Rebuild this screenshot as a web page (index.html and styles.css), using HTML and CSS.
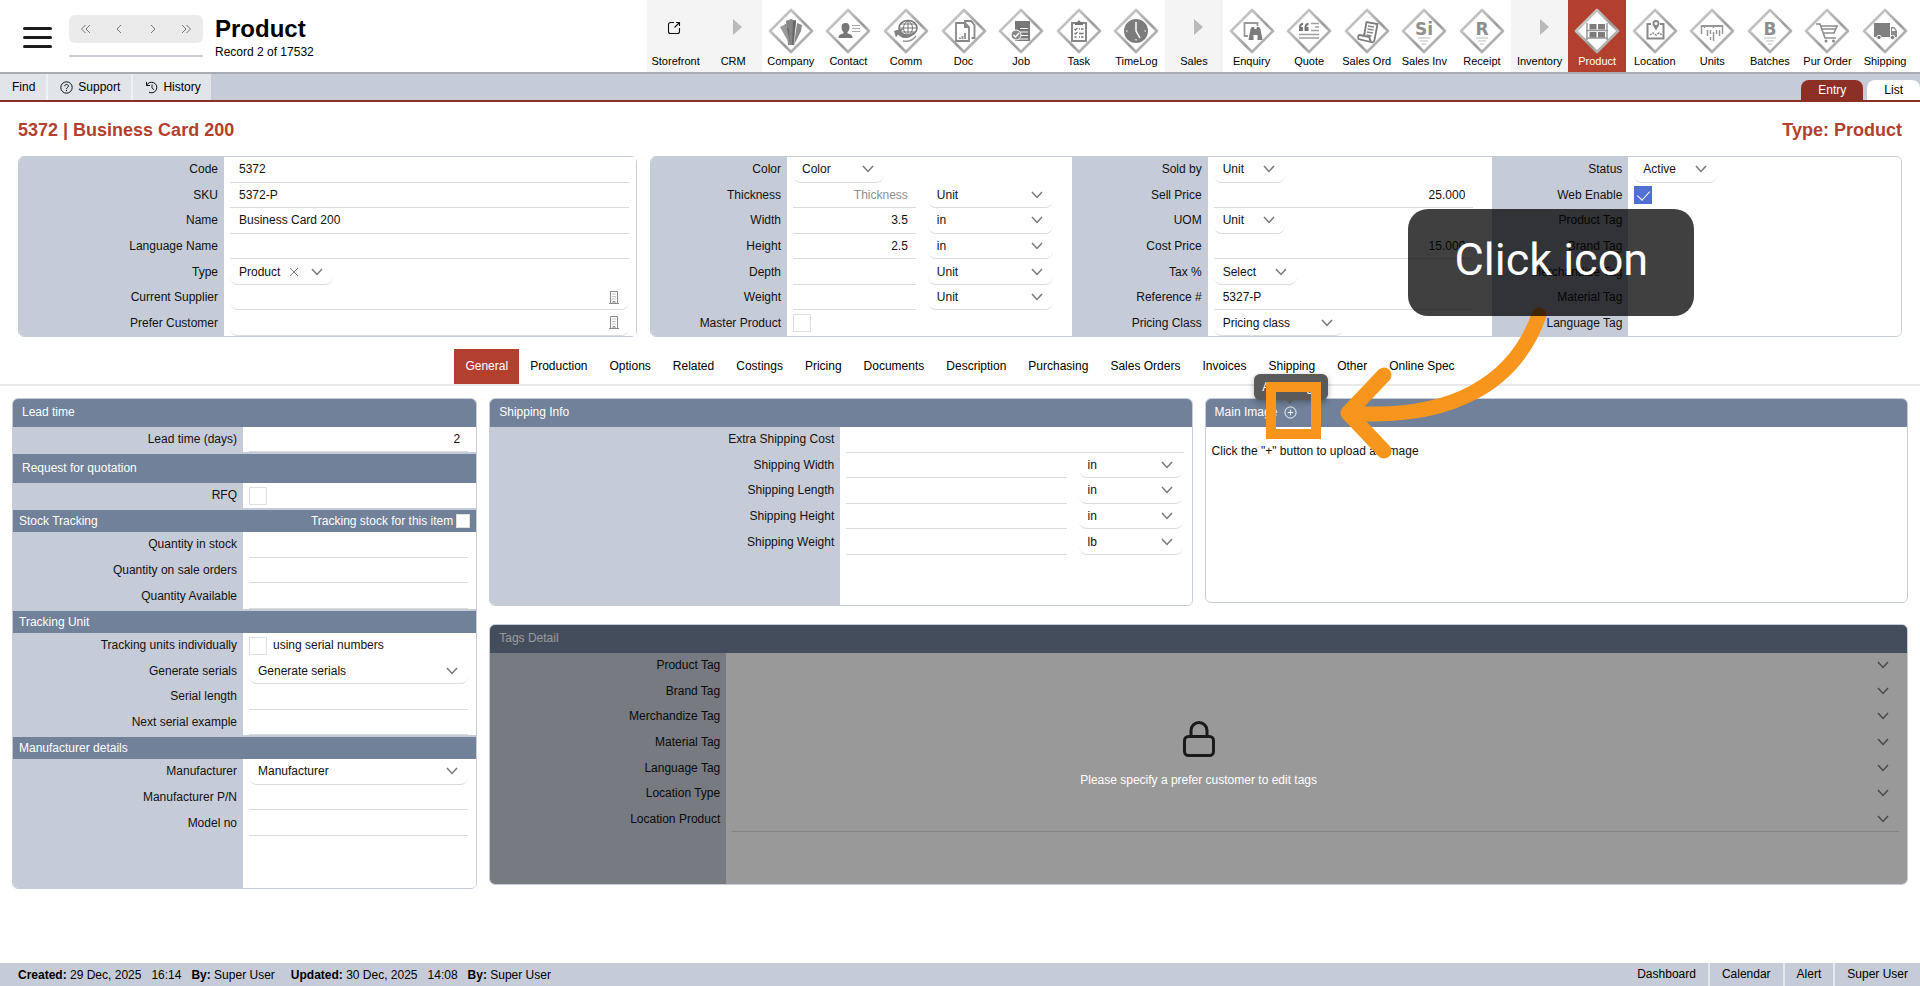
FILE: index.html
```html
<!DOCTYPE html>
<html lang="en">
<head>
<meta charset="utf-8">
<title>Product - 5372 | Business Card 200</title>
<link rel="stylesheet" href="styles.css">
</head>
<body>
<svg class="defs" aria-hidden="true">
  <defs>
    <linearGradient id="edge" x1="0" y1="0" x2="1" y2="1">
      <stop offset="0" stop-color="#d8d8d8"/><stop offset="0.45" stop-color="#b0b0b0"/><stop offset="0.6" stop-color="#9a9a9a"/><stop offset="1" stop-color="#d8d8d8"/>
    </linearGradient>
    <symbol id="chev" viewBox="0 0 12 8"><path d="M1 1l5 5.500 5-5.500" fill="none" stroke="currentColor" stroke-width="1.500"/></symbol>
    <symbol id="diamond" viewBox="0 0 46 46"><path d="M23 2L44 23 23 44 2 23z" fill="#fff" stroke="url(#edge)" stroke-width="2.600" stroke-linejoin="round"/></symbol>
    <symbol id="building" viewBox="0 0 10 13"><path d="M1.500 12V.5h7V12M0 12.500h10M4 12.500v-2h2v2M3.500 3h1M5.500 3h1M3.500 5.500h1M5.500 5.500h1M3.500 8h1M5.500 8h1" fill="none" stroke="currentColor"/></symbol>
  </defs>
</svg>

<header class="top">
  <button class="menu" type="button" aria-label="Menu"><span></span><span></span><span></span></button>
  <div class="pager-box">
    <div class="pager">
      <button type="button" aria-label="First"><svg viewBox="0 0 12 10"><path d="M5.500 1l-4 4 4 4M10 1L6 5l4 4"/></svg></button>
      <button type="button" aria-label="Previous"><svg viewBox="0 0 12 10"><path d="M8 1L4 5l4 4"/></svg></button>
      <button type="button" aria-label="Next"><svg viewBox="0 0 12 10"><path d="M4 1l4 4-4 4"/></svg></button>
      <button type="button" aria-label="Last"><svg viewBox="0 0 12 10"><path d="M2 1l4 4-4 4M6.500 1l4 4-4 4"/></svg></button>
    </div>
  </div>
  <div class="titles">
    <h1>Product</h1>
    <p>Record 2 of 17532</p>
  </div>
  <nav class="modules">
    <a class="mod group" href="#"><span class="pic"><svg class="store" viewBox="0 0 14 14"><path d="M7 1.500H3.500a2 2 0 0 0-2 2v7a2 2 0 0 0 2 2h7a2 2 0 0 0 2-2V7M9 1.500h3.500V5M12.500 1.500L7.500 6.500" fill="none" stroke="#111" stroke-width="1.100"/></svg></span>Storefront</a>
    <a class="mod group" href="#"><span class="pic"><svg class="tri" viewBox="0 0 9 16"><path d="M0 0l9 8-9 8z" fill="#bababa"/></svg></span>CRM</a>
    <a class="mod" href="#"><span class="pic"><svg viewBox="0 0 46 46"><use href="#diamond"/><path d="M18 13l5-2 5 2-2 24h-6z" fill="#868686"/><path d="M12 19l4-2 5 4 1 16z" fill="#999"/><path d="M16 17l2-1 4 20-1-15z" fill="#6a6a6a"/><path d="M34 17l-5-2-3 22 7-14z" fill="#8a8a8a"/><path d="M25 13l3-1-3 25h-1z" fill="#666"/></svg></span>Company</a>
    <a class="mod" href="#"><span class="pic"><svg viewBox="0 0 46 46"><use href="#diamond"/><path d="M20.500 15c3 0 4 2 4 4.500 0 2-1 4-2 4.500v1.500c3 .5 5 1.500 5 4.500H13.500c0-3 2-4 5-4.500V24c-1-.5-2-2.500-2-4.500 0-2.500 1-4.500 4-4.500z" fill="#777"/><path d="M27 17.500h8M27 20.500h8M27 23.500h8" stroke="#aaa"/></svg></span>Contact</a>
    <a class="mod" href="#"><span class="pic"><svg viewBox="0 0 46 46"><use href="#diamond"/><ellipse cx="25" cy="20" rx="9" ry="7.500" fill="#fff" stroke="#777" stroke-width="1.500"/><path d="M25 12.500v15M16 20h18M18 16h14M18 24h14M25 12.500c-6 4-6 11 0 15M25 12.500c6 4 6 11 0 15" stroke="#777" fill="none"/><path d="M11 23l10-3-3 3.500c3 4 10 4 16-2-3 8-13 12-19 5l-2 3z" fill="#808080"/><path d="M20 33c5 1 10-1 13-5" stroke="#999" fill="none" stroke-width="1.500"/></svg></span>Comm</a>
    <a class="mod" href="#"><span class="pic"><svg viewBox="0 0 46 46"><use href="#diamond"/><path d="M24 15v-2h6l3.500 4v13h-3" fill="none" stroke="#888" stroke-width="1.800"/><path d="M15 15h9l4 4v14H15z" fill="#fff" stroke="#888" stroke-width="1.800"/><path d="M23 15v5h5z" fill="#888"/><path d="M18 31v-1.500h2V31M20.500 31v-3h2v3M23 31v-6h2v6" fill="#999"/></svg></span>Doc</a>
    <a class="mod" href="#"><span class="pic"><svg viewBox="0 0 46 46"><use href="#diamond"/><path d="M17 13h15v20H17z" fill="#777"/><path d="M22 20.500h8M22 24h8M22 27.500h8M20 31h10" stroke="#fff" stroke-width="1.200"/><circle cx="18" cy="27" r="5" fill="#888" stroke="#fff"/><path d="M15.500 27l2 2 3.500-4" fill="none" stroke="#fff" stroke-width="1.500"/></svg></span>Job</a>
    <a class="mod" href="#"><span class="pic"><svg viewBox="0 0 46 46"><use href="#diamond"/><path d="M16 15h14v18H16z" fill="none" stroke="#888" stroke-width="2"/><path d="M19 17v-3h2.500c0-2 3-2 3 0H27v3z" fill="#777"/><path d="M18.500 21l1 1 2-2M18.500 25l1 1 2-2M18.500 29h2M23 21h1M25 21h2.500M23 25.500h4.500M23 29h1M25 29h2.500" fill="none" stroke="#777" stroke-width="1.300"/></svg></span>Task</a>
    <a class="mod" href="#"><span class="pic"><svg viewBox="0 0 46 46"><use href="#diamond"/><circle cx="23" cy="23" r="12" fill="#7c7c7c"/><path d="M23 14v9l4 7" fill="none" stroke="#fff" stroke-width="1.500"/><path d="M13 23h1.500M31.500 23H33M23 32.500V31" stroke="#ddd" stroke-width="1.500"/></svg></span>TimeLog</a>
    <a class="mod group" href="#"><span class="pic"><svg class="tri" viewBox="0 0 9 16"><path d="M0 0l9 8-9 8z" fill="#bababa"/></svg></span>Sales</a>
    <a class="mod" href="#"><span class="pic"><svg viewBox="0 0 46 46"><use href="#diamond"/><path d="M19 28h-3.500V15h13v3" fill="none" stroke="#999" stroke-width="1.800"/><path d="M19.500 32l2-11 1.500-2h2l.7 2h1.600l.7-2h2l1.500 2 2 11h-5v-5h-4v5z" fill="#7c7c7c"/></svg></span>Enquiry</a>
    <a class="mod" href="#"><span class="pic"><svg viewBox="0 0 46 46"><use href="#diamond"/><path d="M13 20c0-3 1-5 4-5v2c-1 0-2 1-2 2h2v4h-4zM18.500 20c0-3 1-5 4-5v2c-1 0-2 1-2 2h2v4h-4z" fill="#777"/><path d="M25 15.500h8M29 19h4M25 22.500h8M13 26.500h20M13 30h20" stroke="#a0a0a0" stroke-width="1.600"/></svg></span>Quote</a>
    <a class="mod" href="#"><span class="pic"><svg viewBox="0 0 46 46"><use href="#diamond"/><path d="M20 28l2.500-14 11 2-3 16c-1 3-3 2.500-4 2l-12-3c-1-2 0-4 1-4l10 2c0 2 0 4 2 4" fill="#fff" stroke="#7c7c7c" stroke-width="1.800"/><path d="M24 18l6 1M23.500 21l6 1M23 24l6 1M22.500 27l5 1" stroke="#888" stroke-width="1.300"/></svg></span>Sales Ord</a>
    <a class="mod" href="#"><span class="pic"><svg viewBox="0 0 46 46"><use href="#diamond"/><text class="mono" x="23" y="27">Si</text><path d="M17 30h12M19 33h8M21 36h4" stroke="#bbb"/></svg></span>Sales Inv</a>
    <a class="mod" href="#"><span class="pic"><svg viewBox="0 0 46 46"><use href="#diamond"/><text class="mono" x="23" y="27">R</text><path d="M17 30h12M19 33h8M21 36h4" stroke="#bbb"/></svg></span>Receipt</a>
    <a class="mod group" href="#"><span class="pic"><svg class="tri" viewBox="0 0 9 16"><path d="M0 0l9 8-9 8z" fill="#bababa"/></svg></span>Inventory</a>
    <a class="mod current" href="#"><span class="pic"><svg viewBox="0 0 46 46"><use href="#diamond"/><path d="M13 15v17M33 15v17M12 22.500h22M12 30h22" stroke="#999" stroke-width="1.500"/><path d="M15.500 16h7v5.500h-7zM24 16h7v5.500h-7zM15.500 24h7v5.500h-7zM24 24h7v5.500h-7z" fill="#7c7c7c"/></svg></span>Product</a>
    <a class="mod" href="#"><span class="pic"><svg viewBox="0 0 46 46"><use href="#diamond"/><path d="M19 16h-3.500v14.500h16V16H28" fill="none" stroke="#888" stroke-width="2"/><path d="M24 12a3.500 3.500 0 0 1 3.500 3.500c0 2.500-2 4-3.500 7-1.500-3-3.500-4.500-3.500-7A3.500 3.500 0 0 1 24 12z" fill="#888"/><circle cx="24" cy="15.500" r="1.500" fill="#fff"/><path d="M18 27l3-2 3 2 3-2 3 2" fill="none" stroke="#888" stroke-width="1.500" stroke-dasharray="2 1"/></svg></span>Location</a>
    <a class="mod" href="#"><span class="pic"><svg viewBox="0 0 46 46"><use href="#diamond"/><path d="M12.500 17v9M15.500 17v3M18.500 17v2M21.500 17v2M24.500 17v3M27.500 17v2M30.500 17v2M33.500 17v9M18.500 22v6M21.500 22v4M24.500 24v9M27.500 22v4M30.500 22v6M21.500 29v3" stroke="#969696" stroke-width="1.500"/><path d="M12 18h22" stroke="#969696" stroke-width="2"/></svg></span>Units</a>
    <a class="mod" href="#"><span class="pic"><svg viewBox="0 0 46 46"><use href="#diamond"/><text class="mono" x="23" y="27">B</text><path d="M17 30h12M19 33h8M21 36h4" stroke="#bbb"/></svg></span>Batches</a>
    <a class="mod" href="#"><span class="pic"><svg viewBox="0 0 46 46"><use href="#diamond"/><path d="M12 16h4l5 14h11M17 18h16l-3 7H19.500M18 21h14" fill="none" stroke="#8c8c8c" stroke-width="1.600"/><circle cx="22" cy="33" r="1.500" fill="#8c8c8c"/><circle cx="29.500" cy="33" r="1.500" fill="#8c8c8c"/></svg></span>Pur Order</a>
    <a class="mod" href="#"><span class="pic"><svg viewBox="0 0 46 46"><use href="#diamond"/><path d="M12 15h16v14H12z" fill="#808080"/><path d="M29 19h3.500l2.500 4v6h-6z" fill="#8c8c8c"/><path d="M30 20.500h2l1.500 2.500H30z" fill="#fff"/><circle cx="17" cy="29.500" r="2.200" fill="#777" stroke="#fff"/><circle cx="30.500" cy="29.500" r="2.200" fill="#777" stroke="#fff"/></svg></span>Shipping</a>
  </nav>
</header>

<div class="toolbar">
  <button class="tool" type="button">Find</button>
  <button class="tool" type="button"><svg viewBox="0 0 13 13"><circle cx="6.500" cy="6.500" r="5.700"/><path d="M4.700 5.200c0-2.400 3.700-2.300 3.700 0 0 1.300-1.900 1.400-1.900 2.800M6.500 8.900v1.200"/></svg>Support</button>
  <button class="tool" type="button"><svg viewBox="0 0 13 13"><path d="M1.500 1v3.500H5M1.700 4.300A5.300 5.300 0 1 1 4 11.200M7 3.500v3.300l1.800 2"/></svg>History</button>
  <div class="views">
    <a class="view on" href="#">Entry</a>
    <a class="view" href="#">List</a>
  </div>
</div>

<main>
  <div class="heading"><h2>5372 | Business Card 200</h2><h2>Type: Product</h2></div>

  <div class="summary">
    <section class="panel">
      <div class="rows seven lab-a">
        <div class="row"><label for="code">Code</label><div class="field"><input id="code" value="5372"></div></div>
        <div class="row"><label for="sku">SKU</label><div class="field"><input id="sku" value="5372-P"></div></div>
        <div class="row"><label for="name">Name</label><div class="field"><input id="name" value="Business Card 200"></div></div>
        <div class="row"><label for="lname">Language Name</label><div class="field"><input id="lname"></div></div>
        <div class="row"><label for="type">Type</label><div class="field"><span class="sel w-type"><select id="type"><option>Product</option></select><button class="clear" type="button" aria-label="Clear"><svg viewBox="0 0 10 10"><path d="M1 1l8 8M9 1L1 9"/></svg></button><svg class="chev"><use href="#chev"/></svg></span></div></div>
        <div class="row"><label for="supp">Current Supplier</label><div class="field"><span class="sel grow"><input id="supp"><svg class="bld"><use href="#building"/></svg></span></div></div>
        <div class="row"><label for="cust">Prefer Customer</label><div class="field"><span class="sel grow"><input id="cust"><svg class="bld"><use href="#building"/></svg></span></div></div>
      </div>
    </section>

    <section class="panel trio">
      <div class="rows seven lab-b left-end">
        <div class="row"><label for="color">Color</label><div class="field"><span class="sel w-color"><select id="color"><option>Color</option></select><svg class="chev"><use href="#chev"/></svg></span></div></div>
        <div class="row"><label for="thick">Thickness</label><div class="field pair"><input class="num" id="thick" placeholder="Thickness"><span class="sel"><select aria-label="Thickness unit"><option>Unit</option></select><svg class="chev"><use href="#chev"/></svg></span></div></div>
        <div class="row"><label for="width">Width</label><div class="field pair"><input class="num" id="width" value="3.5"><span class="sel"><select aria-label="Width unit"><option>in</option></select><svg class="chev"><use href="#chev"/></svg></span></div></div>
        <div class="row"><label for="height">Height</label><div class="field pair"><input class="num" id="height" value="2.5"><span class="sel"><select aria-label="Height unit"><option>in</option></select><svg class="chev"><use href="#chev"/></svg></span></div></div>
        <div class="row"><label for="depth">Depth</label><div class="field pair"><input class="num" id="depth"><span class="sel"><select aria-label="Depth unit"><option>Unit</option></select><svg class="chev"><use href="#chev"/></svg></span></div></div>
        <div class="row"><label for="weight">Weight</label><div class="field pair"><input class="num" id="weight"><span class="sel"><select aria-label="Weight unit"><option>Unit</option></select><svg class="chev"><use href="#chev"/></svg></span></div></div>
        <div class="row"><label for="master">Master Product</label><div class="field"><input type="checkbox" id="master"></div></div>
      </div>
      <div class="rows seven lab-b wide-end">
        <div class="row"><label for="sold">Sold by</label><div class="field"><span class="sel w-unit"><select id="sold"><option>Unit</option></select><svg class="chev"><use href="#chev"/></svg></span></div></div>
        <div class="row"><label for="sell">Sell Price</label><div class="field"><input class="num" id="sell" value="25.000"></div></div>
        <div class="row"><label for="uom">UOM</label><div class="field"><span class="sel w-unit"><select id="uom"><option>Unit</option></select><svg class="chev"><use href="#chev"/></svg></span></div></div>
        <div class="row"><label for="cost">Cost Price</label><div class="field"><input class="num" id="cost" value="15.000"></div></div>
        <div class="row"><label for="tax">Tax %</label><div class="field"><span class="sel w-tax"><select id="tax"><option>Select</option></select><svg class="chev"><use href="#chev"/></svg></span></div></div>
        <div class="row"><label for="ref">Reference #</label><div class="field"><input id="ref" value="5327-P"></div></div>
        <div class="row"><label for="pclass">Pricing Class</label><div class="field"><span class="sel w-class"><select id="pclass"><option>Pricing class</option></select><svg class="chev"><use href="#chev"/></svg></span></div></div>
      </div>
      <div class="rows seven lab-b">
        <div class="row"><label for="status">Status</label><div class="field"><span class="sel w-status"><select id="status"><option>Active</option></select><svg class="chev"><use href="#chev"/></svg></span></div></div>
        <div class="row"><label for="web">Web Enable</label><div class="field"><input type="checkbox" id="web" checked></div></div>
        <div class="row"><span class="lab">Product Tag</span></div>
        <div class="row"><span class="lab">Brand Tag</span></div>
        <div class="row"><span class="lab">Merchandize Tag</span></div>
        <div class="row"><span class="lab">Material Tag</span></div>
        <div class="row"><span class="lab">Language Tag</span></div>
      </div>
    </section>
  </div>

  <nav class="tabs">
    <a class="on" href="#">General</a><a href="#">Production</a><a href="#">Options</a><a href="#">Related</a><a href="#">Costings</a><a href="#">Pricing</a><a href="#">Documents</a><a href="#">Description</a><a href="#">Purchasing</a><a href="#">Sales Orders</a><a href="#">Invoices</a><a href="#">Shipping</a><a href="#">Other</a><a href="#">Online Spec</a>
  </nav>

  <div class="details">
    <section class="panel side">
      <h3>Lead time</h3>
      <div class="rows one lab-c"><div class="row"><label for="lead">Lead time (days)</label><div class="field"><input class="num" id="lead" value="2"></div></div></div>
      <h3 class="band">Request for quotation</h3>
      <div class="rows one lab-c"><div class="row"><label for="rfq">RFQ</label><div class="field"><input type="checkbox" id="rfq"></div></div></div>
      <div class="strip band"><h3>Stock Tracking</h3><label for="track">Tracking stock for this item</label><input type="checkbox" class="small" id="track"></div>
      <div class="rows three lab-c">
        <div class="row"><label for="qs">Quantity in stock</label><div class="field"><input id="qs"></div></div>
        <div class="row"><label for="qo">Quantity on sale orders</label><div class="field"><input id="qo"></div></div>
        <div class="row"><label for="qa">Quantity Available</label><div class="field"><input id="qa"></div></div>
      </div>
      <div class="strip band"><h3>Tracking Unit</h3></div>
      <div class="rows four lab-c">
        <div class="row"><label for="tu">Tracking units individually</label><div class="field"><input type="checkbox" id="tu"><span class="note">using serial numbers</span></div></div>
        <div class="row"><label for="gs">Generate serials</label><div class="field"><span class="sel grow"><select id="gs"><option>Generate serials</option></select><svg class="chev"><use href="#chev"/></svg></span></div></div>
        <div class="row"><label for="sl">Serial length</label><div class="field"><input id="sl"></div></div>
        <div class="row"><label for="ns">Next serial example</label><div class="field"><input id="ns"></div></div>
      </div>
      <div class="strip band"><h3>Manufacturer details</h3></div>
      <div class="rows last lab-c">
        <div class="rows three">
          <div class="row"><label for="mf">Manufacturer</label><div class="field"><span class="sel grow"><select id="mf"><option>Manufacturer</option></select><svg class="chev"><use href="#chev"/></svg></span></div></div>
          <div class="row"><label for="mp">Manufacturer P/N</label><div class="field"><input id="mp"></div></div>
          <div class="row"><label for="mn">Model no</label><div class="field"><input id="mn"></div></div>
        </div>
      </div>
    </section>

    <div class="right">
      <section class="panel ship">
        <h3>Shipping Info</h3>
        <div class="rows last lab-d">
          <div class="rows five">
            <div class="row"><label for="xc">Extra Shipping Cost</label><div class="field"><input id="xc"></div></div>
            <div class="row"><label for="sw">Shipping Width</label><div class="field duo"><input id="sw"><span class="sel"><select aria-label="Shipping width unit"><option>in</option></select><svg class="chev"><use href="#chev"/></svg></span></div></div>
            <div class="row"><label for="sn">Shipping Length</label><div class="field duo"><input id="sn"><span class="sel"><select aria-label="Shipping length unit"><option>in</option></select><svg class="chev"><use href="#chev"/></svg></span></div></div>
            <div class="row"><label for="sh">Shipping Height</label><div class="field duo"><input id="sh"><span class="sel"><select aria-label="Shipping height unit"><option>in</option></select><svg class="chev"><use href="#chev"/></svg></span></div></div>
            <div class="row"><label for="sg">Shipping Weight</label><div class="field duo"><input id="sg"><span class="sel"><select aria-label="Shipping weight unit"><option>lb</option></select><svg class="chev"><use href="#chev"/></svg></span></div></div>
          </div>
        </div>
      </section>

      <section class="panel image">
        <h3>Main Image
          <span class="anchor">
            <button class="add" type="button" aria-label="Add image"><svg viewBox="0 0 14 14"><circle cx="7" cy="7" r="6"/><path d="M7 4v6M4 7h6"/></svg></button>
            <span class="tip" role="tooltip">Add image</span>
            <span class="mark"></span>
            <svg class="arrow" viewBox="0 0 230 170"><path d="M22 114C120 121 185 85 209 16M54 76L18 114l36 38"/></svg>
            <span class="callout">Click icon</span>
          </span>
        </h3>
        <p>Click the "+" button to upload an image</p>
      </section>

      <section class="panel tags">
        <h3>Tags Detail</h3>
        <div class="rows last lab-e">
          <div class="rows seven">
            <div class="row"><label for="t1">Product Tag</label><div class="field"><span class="sel bare"><select id="t1"></select><svg class="chev"><use href="#chev"/></svg></span></div></div>
            <div class="row"><label for="t2">Brand Tag</label><div class="field"><span class="sel bare"><select id="t2"></select><svg class="chev"><use href="#chev"/></svg></span></div></div>
            <div class="row"><label for="t3">Merchandize Tag</label><div class="field"><span class="sel bare"><select id="t3"></select><svg class="chev"><use href="#chev"/></svg></span></div></div>
            <div class="row"><label for="t4">Material Tag</label><div class="field"><span class="sel bare"><select id="t4"></select><svg class="chev"><use href="#chev"/></svg></span></div></div>
            <div class="row"><label for="t5">Language Tag</label><div class="field"><span class="sel bare"><select id="t5"></select><svg class="chev"><use href="#chev"/></svg></span></div></div>
            <div class="row"><label for="t6">Location Type</label><div class="field"><span class="sel bare"><select id="t6"></select><svg class="chev"><use href="#chev"/></svg></span></div></div>
            <div class="row"><label for="t7">Location Product</label><div class="field"><span class="sel bare lined"><select id="t7"></select><svg class="chev"><use href="#chev"/></svg></span></div></div>
          </div>
        </div>
        <div class="lock">
          <svg viewBox="0 0 32 36"><rect x="1.500" y="15.500" width="29" height="19" rx="4"/><path d="M8 15.500V9.500a8 8 0 0 1 16 0v6"/></svg>
          <p>Please specify a prefer customer to edit tags</p>
        </div>
      </section>
    </div>
  </div>
</main>

<footer>
  <p class="stamp"><span><b>Created:</b> 29 Dec, 2025</span><span>16:14</span><span><b>By:</b> Super User</span></p>
  <p class="stamp"><span><b>Updated:</b> 30 Dec, 2025</span><span>14:08</span><span><b>By:</b> Super User</span></p>
  <nav class="quick"><a href="#">Dashboard</a><a href="#">Calendar</a><a href="#">Alert</a><a href="#">Super User</a></nav>
</footer>
</body>
</html>
```
FILE: styles.css
```css
:root {
  --mist: #c6ccd7;
  --slate: #708199;
  --line: #dadbdd;
  --red: #b33f2f;
  --dark-red: #8c3026;
}
* { box-sizing: border-box; }
body {
  margin: 0;
  min-height: 100vh;
  display: flex;
  flex-direction: column;
  background: #fff;
  color: #111;
  font: 12px/16px "Liberation Sans", Arial, sans-serif;
}
h1, h2, h3, p { margin: 0; }
a { color: inherit; text-decoration: none; }
button, input, select { font: inherit; color: inherit; margin: 0; padding: 0; border: 0; background: none; border-radius: 0; }
.defs { position: absolute; width: 0; height: 0; }

/* Top bar */
.top { display: flex; height: 74px; border-bottom: 2px solid #a9adb3; }
.menu { display: flex; flex-direction: column; gap: 6px; width: 29px; margin: 27px 17px 0 23px; align-self: flex-start; }
.menu span { height: 3px; width: 100%; border-radius: 2px; background: #1c1c1e; }
.pager-box { width: 134px; height: 42px; margin-top: 15px; border-bottom: 2px solid #c8cbd8; }
.pager { display: flex; height: 28px; border-radius: 6px; background: #ebebeb; }
.pager button { flex: 1; display: grid; place-items: center; }
.pager svg { width: 12px; height: 10px; fill: none; stroke: #777; }
.titles { margin: 14px 0 0 12px; color: #000; }
h1 { font-size: 24px; line-height: 30px; }
.titles p { line-height: 16px; }
.modules { display: flex; flex: 0 0 66%; margin-left: auto; margin-right: 6px; }
.mod { flex: 1; min-width: 0; padding-top: 8px; font-size: 11px; line-height: 14px; text-align: center; color: #000; white-space: nowrap; }
.group { background: #f4f4f4; }
.current { background: var(--red); color: #fff; }
.pic { display: grid; place-items: center; height: 46px; }
.pic svg { width: 46px; height: 46px; }
.pic .store { width: 14px; height: 14px; margin: -6px 4px 0 0; }
.pic .tri { width: 9px; height: 16px; margin: -8px 0 0 9px; }
.mono { font: bold 17px "DejaVu Sans", sans-serif; fill: #8f8f8f; text-anchor: middle; }

/* Toolbar */
.toolbar { display: flex; height: 28px; background: var(--mist); border-bottom: 2px solid var(--dark-red); color: #000; }
.tool { display: flex; align-items: center; gap: 5px; padding: 0 11px 0 12px; background: #e1e4e9; border-right: 2px solid #eff1f4; }
.tool:nth-child(3) { border-right: 0; padding-right: 10px; }
.tool svg { width: 13px; height: 13px; fill: none; stroke: #111; stroke-width: 1; }
.views { display: flex; gap: 4px; margin-left: auto; align-items: flex-end; }
.view { height: 20px; padding: 2px 17px; border-radius: 8px 8px 0 0; background: #fff; }
.view.on { background: var(--dark-red); color: #fff; }

/* Record heading */
main { flex: 1; }
.heading { display: flex; justify-content: space-between; padding: 18px 18px 16px; color: var(--red); }
h2 { font-size: 18px; line-height: 20px; }

/* Panels and form rows */
.panel { border: 1px solid var(--mist); border-radius: 6px; background: #fff; min-width: 0; }
.summary { display: grid; grid-template-columns: 619fr 1252fr; gap: 13px; padding: 0 18px; }
.trio { display: grid; grid-template-columns: 421fr 421fr 409fr; }
.rows { display: flex; flex-direction: column; background: linear-gradient(to right, var(--mist) var(--lab), #fff var(--lab)); }
.rows .rows { background: none; }
.lab-a { --lab: 205px; }
.lab-b { --lab: 136px; }
.lab-c { --lab: 230px; }
.lab-d { --lab: 350px; }
.lab-e { --lab: 236px; }
.one { min-height: 25px; }
.three { min-height: 77px; }
.four { min-height: 102px; }
.five { min-height: 128px; }
.seven { min-height: 179px; }
.panel > .rows:first-child { border-radius: 5px 0 0 5px; }
.panel > .rows.last { border-radius: 0 0 5px 5px; }
.panel > .rows.seven:last-child:not(:first-child) { border-radius: 0 5px 5px 0; }
.row { flex: 1; display: grid; grid-template-columns: var(--lab) 1fr; min-height: 24px; }
.row > label, .lab { align-self: center; padding: 0 6px 1px 0; text-align: right; }
.field { display: flex; align-items: stretch; min-width: 0; padding: 0 8px 0 6px; }
.lab-a .field { padding-right: 7px; }
.left-end .field, .wide-end .field { padding-right: 19px; }
.field > input { width: 100%; min-width: 0; padding: 0 8px 0 9px; border-bottom: 1px solid var(--line); outline: 0; }
.num { text-align: right; }
input::placeholder { color: #8d8f92; opacity: 1; }
.pair { gap: 12px; }
.pair > * { flex: 1; }
.duo { gap: 12px; padding-right: 9px; }
.duo .sel { flex: 0 0 104px; }
.sel { display: flex; align-items: center; padding: 0 10px 0 9px; border-bottom: 1px solid var(--line); border-radius: 0 0 8px 8px; min-width: 0; }
.sel select, .sel input { flex: 1; min-width: 0; width: 100%; height: 100%; appearance: none; outline: 0; }
.grow, .bare { flex: 1; }
.w-type { width: 103px; }
.w-color { width: 91px; }
.w-unit { width: 71px; }
.w-tax { width: 83px; }
.w-class { width: 129px; }
.w-status { width: 83px; }
.chev { flex: none; width: 12px; height: 8px; color: #77797c; }
.clear { display: grid; margin-right: 12px; }
.clear svg { width: 10px; height: 10px; stroke: #77797c; }
.bld { flex: none; width: 10px; height: 13px; color: #8a8a8a; }
input[type="checkbox"] { appearance: none; flex: none; align-self: center; width: 18px; height: 18px; padding: 0; border: 1px solid #dedfe1; background: #fff; }
input[type="checkbox"]:checked { display: grid; place-items: center; border-color: #5170d3; background: #5170d3; }
input[type="checkbox"]:checked::after { content: ""; width: 6px; height: 11px; margin-bottom: 3px; border: solid #fff; border-width: 0 1px 1px 0; transform: rotate(42deg); }
.note { align-self: center; margin-left: 6px; padding-bottom: 1px; }

/* Section tabs */
.tabs { display: flex; justify-content: center; margin-top: 12px; border-bottom: 2px solid #e9e9e9; color: #000; }
.tabs a { padding: 9px 11px 10px; }
.tabs .on { background: var(--red); color: #fff; }

/* Detail panels */
.details { display: grid; grid-template-columns: 465fr 1418fr; gap: 12px; padding: 12px 12px 12px 12px; align-items: start; }
h3 { display: flex; align-items: center; min-height: 28px; padding: 0 9px 2px; background: var(--slate); color: #fff; font-size: 12px; font-weight: normal; }
.panel > h3:first-child { border-radius: 5px 5px 0 0; }
.band { border-top: 2px solid var(--mist); }
h3.band { min-height: 31px; }
.strip { display: flex; align-items: center; min-height: 24px; padding: 0 6px; background: var(--slate); color: #fff; }
.strip h3 { min-height: 0; padding: 0; margin-right: auto; }
input.small { width: 14px; height: 14px; margin-left: 3px; }
.last { flex: 1; }
.side { display: flex; flex-direction: column; min-height: 491px; }
.right { display: grid; grid-template-columns: 1fr 1fr; column-gap: 12px; row-gap: 18px; align-items: start; }
.ship { display: flex; flex-direction: column; min-height: 208px; }
.image { min-height: 205px; }
.image p { padding: 16px 6px; }
.tags { grid-column: 1 / -1; position: relative; display: flex; flex-direction: column; min-height: 261px; }
.bare { border-bottom-color: transparent; border-radius: 0; }
.lined { border-bottom-color: var(--line); }
.lock { position: absolute; inset: 0; display: flex; flex-direction: column; align-items: center; justify-content: center; gap: 15px; border-radius: 5px; background: rgba(0, 0, 0, 0.4); color: #fff; padding-bottom: 1px; }
.lock svg { width: 32px; height: 36px; fill: none; stroke: #1b1b1b; stroke-width: 3; }

/* Guide annotation around the add button */
.anchor { position: relative; z-index: 5; display: block; width: 13px; height: 13px; margin-left: 7px; }
.add { display: block; width: 13px; height: 13px; }
.add svg { display: block; width: 13px; height: 13px; fill: none; stroke: #fff; }
.tip, .mark, .arrow, .callout { position: absolute; }
.tip { left: -30px; top: -32px; padding: 5px 8px; border-radius: 6px; background: #5a5a5a; box-shadow: 0 2px 6px rgba(0, 0, 0, 0.3); white-space: nowrap; }
.tip::after { content: ""; position: absolute; left: 32px; top: 100%; border: 4px solid transparent; border-top-color: #5a5a5a; }
.mark { left: -18px; top: -24px; width: 55px; height: 57px; border: 10px solid #f8951d; }
.arrow { left: 46px; top: -107px; width: 230px; height: 170px; fill: none; stroke: #f8951d; stroke-width: 15; stroke-linecap: round; stroke-linejoin: round; }
.callout { left: 124px; top: -197px; width: 286px; height: 107px; display: grid; place-items: center; padding-bottom: 4px; border-radius: 20px; background: rgba(0, 0, 0, 0.75); font: 400 45px/56px Roboto, sans-serif; white-space: nowrap; }

/* Status bar */
footer { display: flex; align-items: center; gap: 16px; height: 23px; padding-left: 18px; background: var(--mist); color: #000; }
.stamp { display: flex; gap: 10px; }
.quick { display: flex; margin-left: auto; align-self: stretch; }
.quick a { padding: 3px 12px; border-left: 2px solid #e4e7ec; }
.quick a:first-child { border-left: 0; }
```
